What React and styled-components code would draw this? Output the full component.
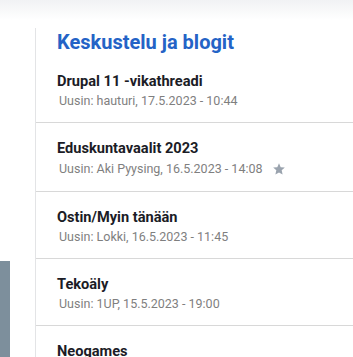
import React from 'react';
import styled, { createGlobalStyle } from 'styled-components';

const GlobalStyle = createGlobalStyle`
  html, body {
    margin: 0;
    padding: 0;
    background: #fff;
    font-family: Roboto, "Liberation Sans", Arial, sans-serif;
  }
  body {
    overflow: hidden;
  }
`;

const Page = styled.div`
  width: 353px;
  height: 357px;
  overflow: hidden;
  display: flex;
  flex-direction: column;
`;

const TopShade = styled.div`
  height: 20px;
  flex-shrink: 0;
  background: linear-gradient(#f1f2f4, #ffffff);
`;

const Main = styled.div`
  display: flex;
  margin-top: 8px;
  flex: 1;
`;

const LeftCol = styled.div`
  width: 35px;
  flex-shrink: 0;
  padding-top: 233px;
`;

const PhotoStrip = styled.div`
  width: 10px;
  height: 200px;
  background: #7d8f9c;
`;

const Sidebar = styled.aside`
  flex: 1;
  border-left: 1px solid #e3e4e6;
`;

const Heading = styled.h2`
  margin: 0;
  padding-left: 21px;
  font-size: 20px;
  line-height: 28px;
  font-weight: 700;
  color: #2463c6;
`;

const TopicList = styled.ul`
  list-style: none;
  margin: 0;
  padding: 0;
`;

const Topic = styled.li`
  padding: 15px 0 11px 21px;
  border-bottom: 1px solid #d8d8d8;
`;

const Title = styled.div`
  font-size: 14.6px;
  line-height: 20px;
  font-weight: 700;
  color: #1b1c26;
`;

const Meta = styled.div`
  display: flex;
  align-items: center;
  gap: 10px;
  padding-left: 2px;
  font-size: 12.5px;
  line-height: 20px;
  color: #7f7f7f;
`;

const Star = styled.svg`
  width: 14px;
  height: 14px;
  margin: 4px 0;
  fill: #9aa3ae;
`;

const topics = [
  { title: 'Drupal 11 -vikathreadi', meta: 'Uusin: hauturi, 17.5.2023 - 10:44' },
  { title: 'Eduskuntavaalit 2023', meta: 'Uusin: Aki Pyysing, 16.5.2023 - 14:08', starred: true },
  { title: 'Ostin/Myin tänään', meta: 'Uusin: Lokki, 16.5.2023 - 11:45' },
  { title: 'Tekoäly', meta: 'Uusin: 1UP, 15.5.2023 - 19:00' },
  { title: 'Neogames' },
];

export default function App() {
  return (
    <>
      <GlobalStyle />
      <Page>
        <TopShade />
        <Main>
          <LeftCol>
            <PhotoStrip />
          </LeftCol>
          <Sidebar>
            <Heading>Keskustelu ja blogit</Heading>
            <TopicList>
              {topics.map((t) => (
                <Topic key={t.title}>
                  <Title>{t.title}</Title>
                  {t.meta && (
                    <Meta>
                      {t.meta}
                      {t.starred && (
                        <Star viewBox="0 0 24 24">
                          <path d="M12 2l2.9 6.9 7.1.6-5.4 4.7 1.6 7.3L12 17.8 5.8 21.5l1.6-7.3L2 9.5l7.1-.6z" />
                        </Star>
                      )}
                    </Meta>
                  )}
                </Topic>
              ))}
            </TopicList>
          </Sidebar>
        </Main>
      </Page>
    </>
  );
}
